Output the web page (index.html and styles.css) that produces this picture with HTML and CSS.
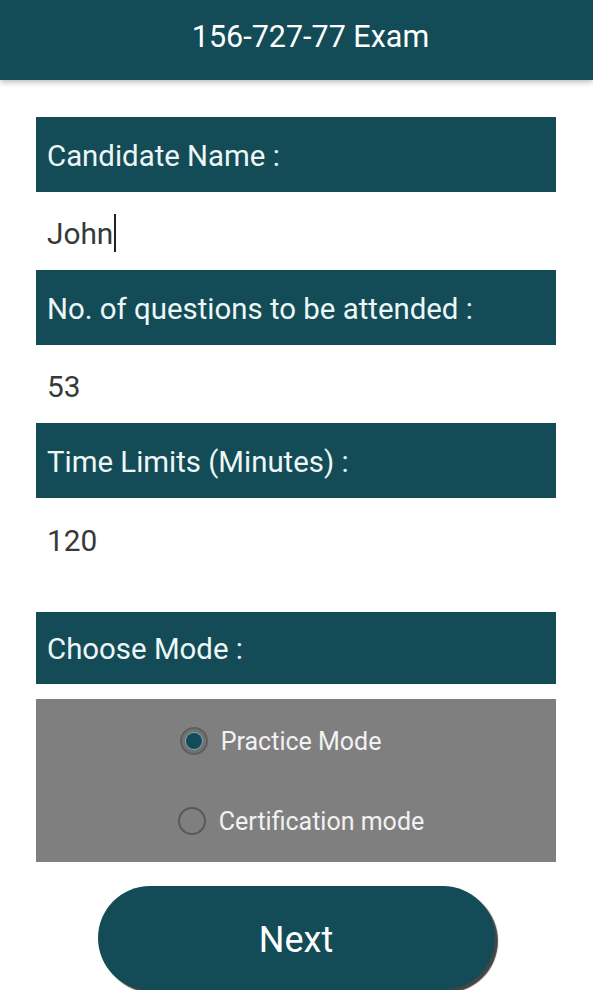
FILE: index.html
```html
<!DOCTYPE html>
<html>
<head>
<meta charset="utf-8">
<link rel="stylesheet" href="styles.css">
</head>
<body>
<header class="appbar"><h1 class="title">156-727-77 Exam</h1></header>
<main class="form">
  <div class="label">Candidate Name :</div>
  <div class="value">John<span class="caret"></span></div>
  <div class="label">No. of questions to be attended :</div>
  <div class="value">53</div>
  <div class="label">Time Limits (Minutes) :</div>
  <div class="value value-last">120</div>
  <div class="label label-short">Choose Mode :</div>
  <div class="modes">
    <div class="mode-list">
      <div class="mode mode-first"><span class="radio checked"></span><span class="mode-text">Practice Mode</span></div>
      <div class="mode"><span class="radio"></span><span class="mode-text">Certification mode</span></div>
    </div>
  </div>
  <div class="actions"><button class="next">Next</button></div>
</main>
</body>
</html>
```
FILE: styles.css
```css
* { box-sizing: border-box; }
html, body { margin: 0; padding: 0; background: #ffffff; }
body {
  width: 593px;
  font-family: Roboto, "Noto Sans", "Liberation Sans", sans-serif;
}
.appbar {
  height: 80px;
  background: #134c57;
  display: flex;
  align-items: center;
  justify-content: center;
  padding: 0 0 8px 28px;
  box-shadow: 0 2px 6px rgba(0, 0, 0, 0.28);
  position: relative;
  z-index: 1;
}
.title {
  margin: 0;
  color: #ffffff;
  font-weight: 400;
  font-size: 30.5px;
}
.form {
  padding: 37px 37px 0 36px;
  display: flex;
  flex-direction: column;
}
.label {
  height: 75px;
  background: #134c57;
  color: #eef7f7;
  font-size: 29.4px;
  display: flex;
  align-items: center;
  padding-left: 11px;
  padding-top: 2px;
}
.label-short { height: 72px; }
.value {
  height: 78px;
  display: flex;
  align-items: center;
  padding-left: 11px;
  padding-top: 4px;
  color: #343a3a;
  font-size: 29.8px;
}
.value-last { height: 114px; padding-bottom: 34px; }
.caret {
  display: inline-block;
  width: 1.5px;
  height: 38px;
  background: #222;
  margin-left: 1px;
}
.modes {
  margin-top: 15px;
  height: 163px;
  background: #807f80;
  display: flex;
  justify-content: center;
  padding: 2px 0 1px 10px;
}
.mode-list {
  display: flex;
  flex-direction: column;
}
.mode {
  height: 80px;
  display: flex;
  align-items: center;
  gap: 13px;
}
.mode-first { padding-left: 2px; }
.mode-text {
  color: #f2f2f2;
  font-size: 25px;
}
.radio {
  width: 28px;
  height: 28px;
  border-radius: 50%;
  border: 2px solid #595959;
  display: flex;
  align-items: center;
  justify-content: center;
}
.radio.checked {
  border-color: #5f5f5f;
  background: #727272;
}
.radio.checked::after {
  content: "";
  width: 16px;
  height: 16px;
  border-radius: 50%;
  background: #134c57;
  box-shadow: 0 0 0 1px #7fa5ad;
}
.actions {
  display: flex;
  justify-content: center;
  padding: 24px 0 0 24px;
}
.next {
  width: 397px;
  height: 104px;
  border: none;
  border-radius: 52px;
  background: #134c57;
  color: #ffffff;
  font-family: Roboto, "Noto Sans", "Liberation Sans", sans-serif;
  font-size: 36px;
  padding-top: 4px;
  box-shadow: 3px 3px 1px #454545;
  margin-right: 24px;
}
```
